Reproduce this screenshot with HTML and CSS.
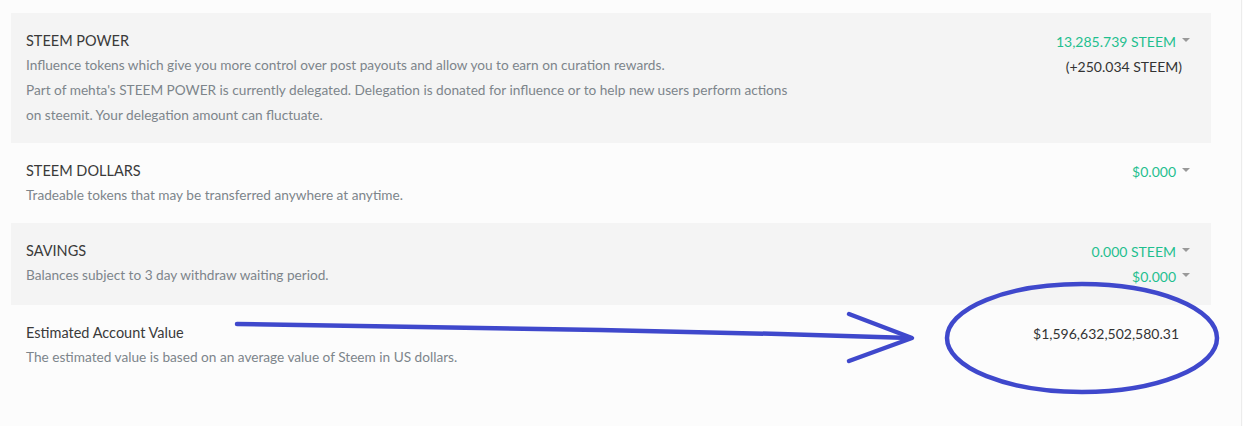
FILE: index.html
```html
<!DOCTYPE html>
<html>
<head>
<meta charset="utf-8">
<link rel="stylesheet" href="styles.css">
</head>
<body>
<div class="page">
  <div class="wallet">
    <div class="row shaded">
      <div class="info">
        <div class="title">STEEM POWER</div>
        <div class="desc">Influence tokens which give you more control over post payouts and allow you to earn on curation rewards.</div>
        <div class="desc">Part of mehta's STEEM POWER is currently delegated. Delegation is donated for influence or to help new users perform actions<br>on steemit. Your delegation amount can fluctuate.</div>
      </div>
      <div class="amounts">
        <div class="amount">13,285.739 STEEM<span class="caret"></span></div>
        <div class="delegated">(+250.034 STEEM)</div>
      </div>
    </div>
    <div class="row">
      <div class="info">
        <div class="title">STEEM DOLLARS</div>
        <div class="desc">Tradeable tokens that may be transferred anywhere at anytime.</div>
      </div>
      <div class="amounts">
        <div class="amount">$0.000<span class="caret"></span></div>
      </div>
    </div>
    <div class="row shaded">
      <div class="info">
        <div class="title">SAVINGS</div>
        <div class="desc">Balances subject to 3 day withdraw waiting period.</div>
      </div>
      <div class="amounts">
        <div class="amount">0.000 STEEM<span class="caret"></span></div>
        <div class="amount">$0.000<span class="caret"></span></div>
      </div>
    </div>
    <div class="row">
      <div class="info">
        <div class="title">Estimated Account Value</div>
        <div class="desc">The estimated value is based on an average value of Steem in US dollars.</div>
      </div>
      <div class="amounts">
        <div class="value">$1,596,632,502,580.31</div>
      </div>
    </div>
  </div>
  <svg class="annotation" width="1243" height="426" viewBox="0 0 1243 426">
    <g fill="none" stroke="#3f48cc" stroke-width="4.5" stroke-linecap="round" stroke-linejoin="round">
      <path d="M237 324 L420 327 L600 330 L780 334 L910 338"/>
      <path d="M849 314 L912 338 L849 361"/>
      <ellipse cx="1082" cy="338" rx="135" ry="54"/>
    </g>
  </svg>
</div>
</body>
</html>
```

FILE: styles.css
```css
html, body {
  margin: 0;
  padding: 0;
  background: #fcfcfc;
}

.page {
  position: relative;
  width: 1241px;
  height: 426px;
  border-right: 1px solid #ececec;
  font-family: "Lato", "Open Sans", sans-serif;
  overflow: hidden;
}

.wallet {
  width: 1200px;
  padding: 13px 0 0 11px;
}

.row {
  display: flex;
  justify-content: space-between;
  padding: 16px 21px 15px 15px;
}

.row:nth-child(3) {
  padding-bottom: 16px;
}

.shaded {
  background: #f4f4f4;
}

.title {
  font-size: 14.5px;
  line-height: 24px;
  color: #3a3a3a;
}

.desc {
  font-size: 13.65px;
  line-height: 25px;
  color: #7d858b;
}

.amounts {
  display: flex;
  flex-direction: column;
  align-items: flex-end;
  font-size: 14px;
  line-height: 25px;
}

.amount {
  color: #1fbf8f;
  display: flex;
  align-items: center;
}

.caret {
  display: inline-block;
  width: 0;
  height: 0;
  margin-left: 6px;
  border-left: 4px solid transparent;
  border-right: 4px solid transparent;
  border-top: 4px solid #999999;
  position: relative;
  top: -2px;
}

.delegated {
  color: #333333;
  margin-right: 8px;
}

.value {
  color: #333333;
  font-size: 14px;
  margin-right: 11px;
}

.annotation {
  position: absolute;
  left: 0;
  top: 0;
  pointer-events: none;
}
```
